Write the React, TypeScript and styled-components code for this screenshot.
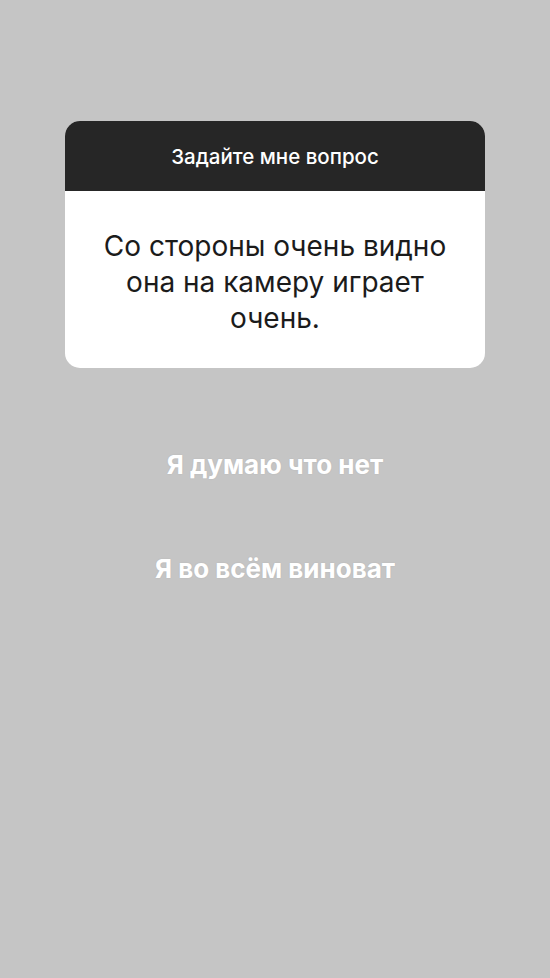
import React from "react";
import styled, { createGlobalStyle } from "styled-components";

const Global = createGlobalStyle`
  html, body {
    margin: 0;
    padding: 0;
    background: #c5c5c5;
  }
  body {
    font-family: Inter, "Liberation Sans", Arial, sans-serif;
  }
`;

const Screen = styled.div`
  width: 550px;
  height: 978px;
  background: #c5c5c5;
  display: flex;
  flex-direction: column;
  align-items: center;
  padding-top: 121px;
  box-sizing: border-box;
`;

const Card = styled.div`
  width: 420px;
  border-radius: 15px;
  overflow: hidden;
  background: #ffffff;
  display: flex;
  flex-direction: column;
`;

const CardHeader = styled.div`
  height: 70px;
  background: #262626;
  color: #ffffff;
  display: flex;
  align-items: center;
  justify-content: center;
  font-size: 20.5px;
  font-weight: 500;
  padding-top: 1px;
  box-sizing: border-box;
`;

const CardBody = styled.div`
  height: 177px;
  display: flex;
  align-items: center;
  justify-content: center;
  text-align: center;
  color: #1b1b1b;
  font-size: 28px;
  line-height: 36px;
  padding: 5px 20px 0;
  box-sizing: border-box;
`;

const Answers = styled.div`
  display: flex;
  flex-direction: column;
  align-items: center;
  gap: 72px;
  margin-top: 81px;
`;

const Answer = styled.div`
  color: #ffffff;
  font-weight: 700;
  font-size: 26px;
  line-height: 32px;
  text-shadow: 0 0 2px rgba(0, 0, 0, 0.08);
`;

export default function App() {
  return (
    <>
      <Global />
      <Screen>
        <Card>
          <CardHeader>Задайте мне вопрос</CardHeader>
          <CardBody>
            Со стороны очень видно
            <br />
            она на камеру играет
            <br />
            очень.
          </CardBody>
        </Card>
        <Answers>
          <Answer>Я думаю что нет</Answer>
          <Answer>Я во всём виноват</Answer>
        </Answers>
      </Screen>
    </>
  );
}
